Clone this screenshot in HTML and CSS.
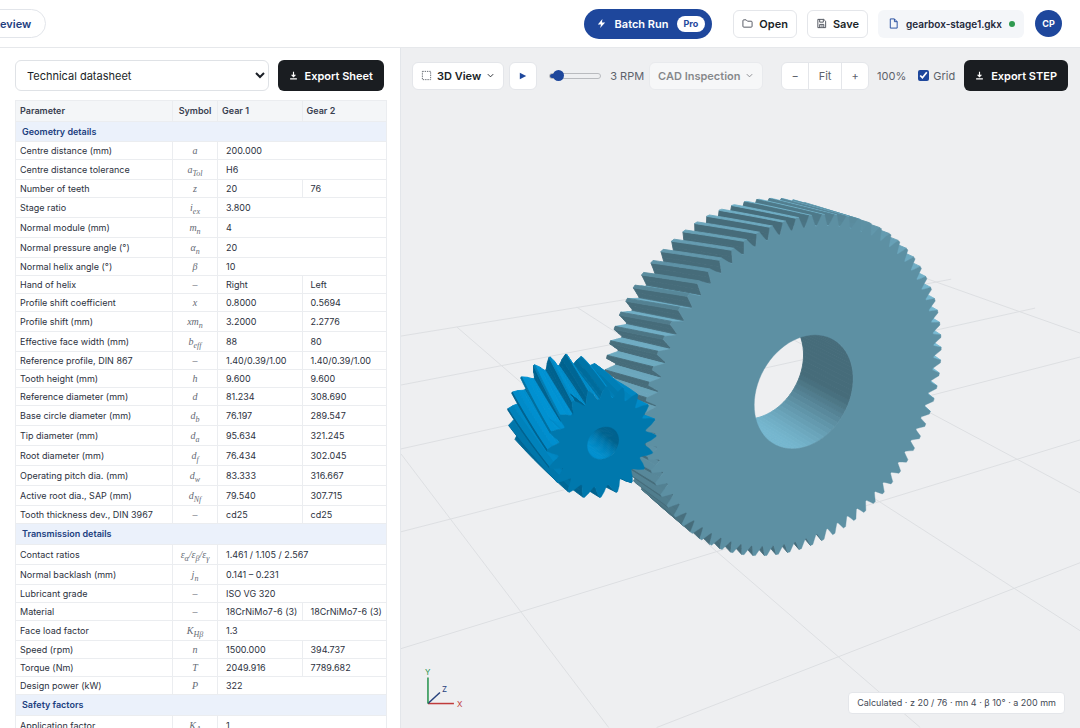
FILE: index.html
```html
<!DOCTYPE html>
<html lang="en">
<head>
<meta charset="utf-8">
<title>gearbox-stage1.gkx</title>
<link rel="stylesheet" href="styles.css">
</head>
<body>
<header class="topbar">
  <button class="review-pill" type="button">Review</button>
  <div class="topbar-actions">
    <button class="batch" type="button">
      <svg class="icon" viewBox="0 0 24 24"><path class="solid" d="M14 2 4 14h7l-2 8 11-12h-7z"/></svg>
      Batch Run <span class="pro">Pro</span>
    </button>
    <div class="file-actions">
      <button class="btn" type="button">
        <svg class="icon" viewBox="0 0 24 24"><path d="M2 6a2 2 0 0 1 2-2h5l3 3h8a2 2 0 0 1 2 2v9a2 2 0 0 1-2 2H4a2 2 0 0 1-2-2z"/></svg>Open</button>
      <button class="btn" type="button">
        <svg class="icon" viewBox="0 0 24 24"><path d="M4 3h13l4 4v14H4zM8 3v6h8V3M8 21v-7h9v7M10 17.500h5"/></svg>Save</button>
      <div class="file-chip">
        <svg class="icon" viewBox="0 0 24 24"><path d="M5 2h9l6 6v14H5zM14 2v6h6"/></svg>gearbox-stage1.gkx<span class="dot"></span></div>
    </div>
    <button class="avatar" type="button">CP</button>
  </div>
</header>
<main class="workspace">
  <section class="sheet">
    <div class="sheet-controls">
      <select class="sheet-select" aria-label="Sheet type"><option>Technical datasheet</option></select>
      <button class="export" type="button"><svg class="icon" viewBox="0 0 24 24"><path d="M12 2v13M7 10l5 5 5-5M3 21h18"/></svg>Export Sheet</button>
    </div>
    <table class="params">
      <colgroup><col class="c-name"><col class="c-sym"><col class="c-val"><col class="c-val"></colgroup>
      <thead><tr><th>Parameter</th><th class="sym-head">Symbol</th><th>Gear 1</th><th>Gear 2</th></tr></thead>
      <tbody>
        <tr class="group"><th colspan="4">Geometry details</th></tr>
        <tr><td>Centre distance (mm)</td><td>a</td><td colspan="2">200.000</td></tr>
        <tr class="sub"><td>Centre distance tolerance</td><td>a<sub>Tol</sub></td><td colspan="2">H6</td></tr>
        <tr><td>Number of teeth</td><td>z</td><td>20</td><td>76</td></tr>
        <tr class="sub"><td>Stage ratio</td><td>i<sub>ex</sub></td><td colspan="2">3.800</td></tr>
        <tr class="sub"><td>Normal module (mm)</td><td>m<sub>n</sub></td><td colspan="2">4</td></tr>
        <tr class="sub"><td>Normal pressure angle (°)</td><td>α<sub>n</sub></td><td colspan="2">20</td></tr>
        <tr><td>Normal helix angle (°)</td><td>β</td><td colspan="2">10</td></tr>
        <tr><td>Hand of helix</td><td>–</td><td>Right</td><td>Left</td></tr>
        <tr><td>Profile shift coefficient</td><td>x</td><td>0.8000</td><td>0.5694</td></tr>
        <tr class="sub"><td>Profile shift (mm)</td><td>xm<sub>n</sub></td><td>3.2000</td><td>2.2776</td></tr>
        <tr class="sub"><td>Effective face width (mm)</td><td>b<sub>eff</sub></td><td>88</td><td>80</td></tr>
        <tr><td>Reference profile, DIN 867</td><td>–</td><td>1.40/0.39/1.00</td><td>1.40/0.39/1.00</td></tr>
        <tr><td>Tooth height (mm)</td><td>h</td><td>9.600</td><td>9.600</td></tr>
        <tr><td>Reference diameter (mm)</td><td>d</td><td>81.234</td><td>308.690</td></tr>
        <tr class="sub"><td>Base circle diameter (mm)</td><td>d<sub>b</sub></td><td>76.197</td><td>289.547</td></tr>
        <tr class="sub"><td>Tip diameter (mm)</td><td>d<sub>a</sub></td><td>95.634</td><td>321.245</td></tr>
        <tr class="sub"><td>Root diameter (mm)</td><td>d<sub>f</sub></td><td>76.434</td><td>302.045</td></tr>
        <tr class="sub"><td>Operating pitch dia. (mm)</td><td>d<sub>w</sub></td><td>83.333</td><td>316.667</td></tr>
        <tr class="sub"><td>Active root dia., SAP (mm)</td><td>d<sub>Nf</sub></td><td>79.540</td><td>307.715</td></tr>
        <tr><td>Tooth thickness dev., DIN 3967</td><td>–</td><td>cd25</td><td>cd25</td></tr>
        <tr class="group"><th colspan="4">Transmission details</th></tr>
        <tr class="sub"><td>Contact ratios</td><td>ε<sub>α</sub>/ε<sub>β</sub>/ε<sub>γ</sub></td><td colspan="2">1.461 / 1.105 / 2.567</td></tr>
        <tr class="sub"><td>Normal backlash (mm)</td><td>j<sub>n</sub></td><td colspan="2">0.141 – 0.231</td></tr>
        <tr><td>Lubricant grade</td><td>–</td><td colspan="2">ISO VG 320</td></tr>
        <tr><td>Material</td><td>–</td><td>18CrNiMo7-6 (3)</td><td>18CrNiMo7-6 (3)</td></tr>
        <tr class="sub"><td>Face load factor</td><td>K<sub>Hβ</sub></td><td colspan="2">1.3</td></tr>
        <tr><td>Speed (rpm)</td><td>n</td><td>1500.000</td><td>394.737</td></tr>
        <tr><td>Torque (Nm)</td><td>T</td><td>2049.916</td><td>7789.682</td></tr>
        <tr><td>Design power (kW)</td><td>P</td><td colspan="2">322</td></tr>
        <tr class="group"><th colspan="4">Safety factors</th></tr>
        <tr class="sub"><td>Application factor</td><td>K<sub>A</sub></td><td colspan="2">1</td></tr>
      </tbody>
    </table>
  </section>
  <section class="viewer">
    <svg class="scene" viewBox="400 48 680 680" role="img" aria-label="Gear pair">
      <g class="grid">
        <path d="M400 336 640 297M400 385 951 279M400 449 1035 308M400 532 1080 357M400 649 1080 440M656 728 1080 563"/>
        <path d="M400 454 608 728M456 327 920 728M576 307 1080 631M700 290 1080 493M880 262 1080 333"/>
      </g>
      <g id="gears"></g>
      <g class="axes">
        <path class="ax-x" d="M427 704H453"/><path class="ax-z" d="M427 704 439 693"/><path class="ax-y" d="M427 704V678"/>
        <text class="tx" x="456" y="707">X</text><text class="tz" x="441" y="692">Z</text><text class="ty" x="424" y="675">Y</text>
      </g>
    </svg>
    <div class="toolbar">
      <button class="btn" type="button"><svg class="icon" viewBox="0 0 24 24"><path stroke-dasharray="3 2" d="M3 3h18v18H3z"/></svg>3D View<svg class="chev" viewBox="0 0 10 10"><path d="M2 3.500l3 3 3-3"/></svg></button>
      <button class="btn play" type="button" aria-label="Play"><svg viewBox="0 0 10 10"><path d="M1 1l8 4-8 4z"/></svg></button>
      <input class="speed" type="range" min="0" max="30" value="2" aria-label="Speed">
      <span class="rpm">3 RPM</span>
      <button class="btn inspect" type="button" disabled>CAD Inspection<svg class="chev" viewBox="0 0 10 10"><path d="M2 3.500l3 3 3-3"/></svg></button>
      <div class="zoom"><button type="button">−</button><button type="button">Fit</button><button type="button">+</button></div>
      <span class="percent">100%</span>
      <label class="grid-toggle"><input type="checkbox" checked>Grid</label>
      <button class="export" type="button"><svg class="icon" viewBox="0 0 24 24"><path d="M12 2v13M7 10l5 5 5-5M3 21h18"/></svg>Export STEP</button>
    </div>
    <div class="status">Calculated · z 20 / 76 · mn 4 · β 10° · a 200 mm</div>
  </section>
</main>
<script src="gears.js"></script>
</body>
</html>
```
FILE: styles.css
```css
* { box-sizing: border-box; }
body { margin: 0; height: 100vh; display: flex; flex-direction: column; overflow: hidden; background: #fff; color: #1b1f27; font-family: Inter, "Liberation Sans", sans-serif; font-size: 11px; }
button, select, input { font: inherit; color: inherit; margin: 0; }
button { display: inline-flex; align-items: center; justify-content: center; white-space: nowrap; cursor: pointer; }
.icon { width: 11px; height: 11px; fill: none; stroke: currentColor; stroke-width: 2; flex: none; }
.solid { fill: currentColor; stroke: none; }
.topbar { height: 48px; flex: none; display: flex; align-items: center; justify-content: space-between; padding-right: 18px; border-bottom: 1px solid #e6e8eb; overflow: hidden; }
.review-pill { height: 29px; margin-left: -22px; padding: 0 14px; border: 1px solid #e2e5ea; border-radius: 15px; background: #fff; color: #23407f; font-weight: 600; }
.topbar-actions { display: flex; align-items: center; gap: 11px; }
.batch { height: 30px; gap: 8px; padding: 0 7px 0 12px; margin-right: 10px; border: 0; border-radius: 15px; background: #1e479c; color: #fff; font-weight: 600; }
.pro { padding: 0 7px; line-height: 16px; border-radius: 8px; background: #fff; color: #1e479c; font-size: 9px; font-weight: 700; }
.file-actions { display: flex; gap: 10px; }
.btn { height: 28px; gap: 6px; padding: 0 8px; border: 1px solid #e4e6ea; border-radius: 6px; background: #fff; font-weight: 600; }
.file-actions .icon { color: #4a4f59; }
.file-chip { height: 28px; display: flex; align-items: center; gap: 7px; padding: 0 9px 0 10px; border-radius: 6px; background: #f4f6f9; font-size: 10px; font-weight: 600; color: #23283a; }
.file-chip .icon { color: #1e479c; }
.dot { width: 6px; height: 6px; border-radius: 50%; background: #2f9a50; }
.avatar { width: 27px; height: 27px; padding: 0; border: 0; border-radius: 50%; background: #1e479c; color: #fff; font-size: 9px; font-weight: 700; }
.workspace { flex: 1; min-height: 0; display: flex; }
.sheet { flex: 0 0 401px; padding: 12px 13px 0 15px; border-right: 1px solid #e3e6ea; overflow: hidden; }
.sheet-controls { display: flex; gap: 9px; margin: 0 3px 9px 0; }
.sheet-select { flex: 1; height: 31px; padding: 0 0 0 7px; border: 1px solid #dfe2e6; border-radius: 6px; background: #fff; }
.export { height: 31px; gap: 7px; padding: 0 11px; border: 0; border-radius: 6px; background: #1a1d21; color: #fff; font-weight: 600; }
.export .icon { width: 9px; height: 9px; stroke-width: 3; }
.params { width: 100%; table-layout: fixed; border-collapse: collapse; font-size: 9px; line-height: 12px; color: #2c3140; }
.c-name { width: 157px; } .c-sym { width: 45px; }
.params th, .params td { padding: 0 4px; border: 1px solid #ebedf0; text-align: left; white-space: nowrap; }
.params tr { height: 18px; } .params tr.sub { height: 20px; }
.params thead tr { height: 21px; } .params thead th { background: #f4f6f8; font-weight: 600; color: #394050; }
.params .group { height: 20px; } .params .sub ~ .group { height: 21px; }
.params .group th { padding-left: 6px; background: #ebf1fb; color: #21407f; font-weight: 600; }
.params td:nth-child(2) { padding: 0; text-align: center; font-family: "Liberation Serif", serif; font-style: italic; font-size: 10px; color: #656a74; }
.params .sym-head { padding: 0; text-align: center; }
.params td:nth-child(n+3) { padding-left: 8px; }
.params sub { font-size: 8px; line-height: 0; }
.viewer { flex: 1; min-width: 0; position: relative; background: #eeeff1; }
.scene { position: absolute; inset: 0; width: 100%; height: 100%; }
.grid { fill: none; stroke: #dddfe2; }
.axes { fill: none; stroke-width: 1.5; font-size: 8px; }
.axes text { stroke: none; }
.ax-x { stroke: #c03b3b; } .ax-y { stroke: #21914a; } .ax-z { stroke: #26407c; }
.tx { fill: #c03b3b; } .ty { fill: #21914a; } .tz { fill: #26407c; }
.toolbar { position: relative; display: flex; align-items: center; padding: 12px 12px 0 11px; color: #5d626b; white-space: nowrap; }
.toolbar .btn { gap: 5px; color: #1b1f27; }
.toolbar .btn .icon { color: #5d626b; }
.chev { width: 9px; height: 9px; fill: none; stroke: currentColor; flex: none; }
.toolbar .play { width: 28px; padding: 0; margin: 0 12px 0 5px; }
.play svg { width: 8px; height: 8px; fill: #1e479c; }
.speed { appearance: none; flex: none; width: 52px; height: 12px; background: transparent; }
.speed::-webkit-slider-runnable-track { height: 6px; border: 1px solid #b9bbbf; border-radius: 3px; background: linear-gradient(90deg, #1e479c 8px, #eeeff1 8px); }
.speed::-webkit-slider-thumb { appearance: none; width: 11px; height: 11px; margin-top: -4px; border-radius: 50%; background: #1e479c; }
.rpm { margin: 0 5px 0 9px; }
.toolbar .inspect { opacity: .5; }
.zoom { display: flex; margin-left: auto; border: 1px solid #e4e6ea; border-radius: 6px; background: #fff; }
.zoom button { width: 26px; height: 26px; padding: 0; border: 0; background: none; }
.zoom button:nth-child(2) { width: 34px; border: solid #e4e6ea; border-width: 0 1px; }
.percent { margin: 0 12px 0 8px; }
.grid-toggle { display: flex; align-items: center; gap: 4px; margin-right: 9px; }
.grid-toggle input { width: 11px; height: 11px; accent-color: #1e479c; }
.status { position: absolute; right: 15px; bottom: 14px; padding: 0 8px; line-height: 20px; border: 1px solid #e4e6ea; border-radius: 4px; background: #fff; font-size: 9px; color: #444a55; }
```
FILE: gears.js
```js
// Perspective camera: angles in radians, lengths in mm, wheel centre in scene units.
const cam = { yaw: 0.5519, pitch: 0.3781, focal: 1056.2, dist: 947.6, cx: 804.6, cy: 392.7 };
const light = [0.3, 0.85, 0.43];
const NS = 'http://www.w3.org/2000/svg';
const host = document.getElementById('gears');

function project(x, y, z) {
  const sa = Math.sin(cam.yaw), ca = Math.cos(cam.yaw), sb = Math.sin(cam.pitch), cb = Math.cos(cam.pitch);
  const d = cam.dist + sa * cb * x - sb * y - ca * cb * z;
  const px = ca * x + sa * z + (cam.cx - 740) * cam.dist / cam.focal;
  const py = sa * sb * x + cb * y - ca * sb * z - (cam.cy - 388) * cam.dist / cam.focal;
  return [740 + cam.focal * px / d, 388 - cam.focal * py / d, d];
}

function shape(d, fill, seam) {
  const p = document.createElementNS(NS, 'path');
  p.setAttribute('d', d);
  p.setAttribute('fill', fill);
  p.setAttribute('fill-rule', 'evenodd');
  p.setAttribute('stroke', fill);
  p.setAttribute('stroke-width', seam);
  p.setAttribute('stroke-linejoin', 'round');
  host.append(p);
}

const toPath = pts => 'M' + pts.map(p => p[0].toFixed(2) + ' ' + p[1].toFixed(2)).join('L') + 'Z';

function gear(g) {
  const tone = n => {
    const m = g.ambient + g.diffuse * Math.max(0, n[0] * light[0] + n[1] * light[1] + n[2] * light[2]);
    return 'rgb(' + g.color.map(v => Math.round(Math.min(255, v * m))) + ')';
  };
  const ring = z => {
    const out = [];
    for (let i = 0; i < g.teeth; i++) for (const [a, r] of g.profile) {
      const t = (g.phase + a + i * 360 / g.teeth) * Math.PI / 180 + g.twist * (z - g.front);
      out.push([g.x + r * Math.cos(t), r * Math.sin(t), z]);
    }
    return out;
  };
  // One lengthwise strip per profile edge, camera-facing only, far ones first.
  const wall = rings => {
    const strips = [], mid = rings.length >> 1, count = rings[0].length;
    for (let i = 0; i < count; i++) {
      const j = (i + 1) % count, a = rings[mid][i], b = rings[mid][j], c = rings[mid - 1][i];
      const u = b.map((v, k) => v - a[k]), w = c.map((v, k) => v - a[k]);
      const n = [u[1] * w[2] - u[2] * w[1], u[2] * w[0] - u[0] * w[2], u[0] * w[1] - u[1] * w[0]];
      const l = Math.hypot(...n);
      const S = [...rings.map(r => r[i]), ...rings.map(r => r[j]).reverse()].map(p => project(...p));
      const area = S.reduce((s, p, k) => { const q = S[(k + 1) % S.length]; return s + p[0] * q[1] - q[0] * p[1]; }, 0);
      if (area > 0) continue;
      strips.push({ d: toPath(S), z: S.reduce((s, p) => s + p[2], 0), c: tone(n.map(v => v / l)) });
    }
    strips.sort((a, b) => b.z - a.z).forEach(q => shape(q.d, q.c, 0.9));
  };
  const rings = Array.from({ length: 9 }, (_, s) => ring(g.front - g.width * s / 8));
  wall(rings);

  const circle = z => Array.from({ length: 72 }, (_, i) => {
    const t = -i * Math.PI / 36;
    return [g.x + g.bore * Math.cos(t), g.bore * Math.sin(t), z];
  });
  wall([circle(g.front), circle(g.front - g.width)]);
  const outline = pts => toPath(pts.map(p => project(...p)));
  shape(outline(rings[0]) + outline(circle(g.front)), tone([0, 0, 1]), 0.4);
}

gear({ teeth: 76, x: 0, front: 0, width: 80, bore: 54, twist: -0.00114, phase: -0.4,
  color: [93, 144, 163], ambient: 0.75, diffuse: 0.58,
  profile: [[-2.1, 151], [-1.3, 155.5], [-0.5, 160.6], [0.5, 160.6], [1.3, 155.5], [2.1, 151]] });
gear({ teeth: 20, x: -200, front: 4, width: 88, bore: 14, twist: 0.00434, phase: 12,
  color: [0, 120, 173], ambient: 0.82, diffuse: 0.42,
  profile: [[-8.2, 38.2], [-6.6, 39.8], [-4.2, 43.5], [-0.7, 47.8], [0.7, 47.8], [4.2, 43.5], [6.6, 39.8], [8.2, 38.2]] });
```
